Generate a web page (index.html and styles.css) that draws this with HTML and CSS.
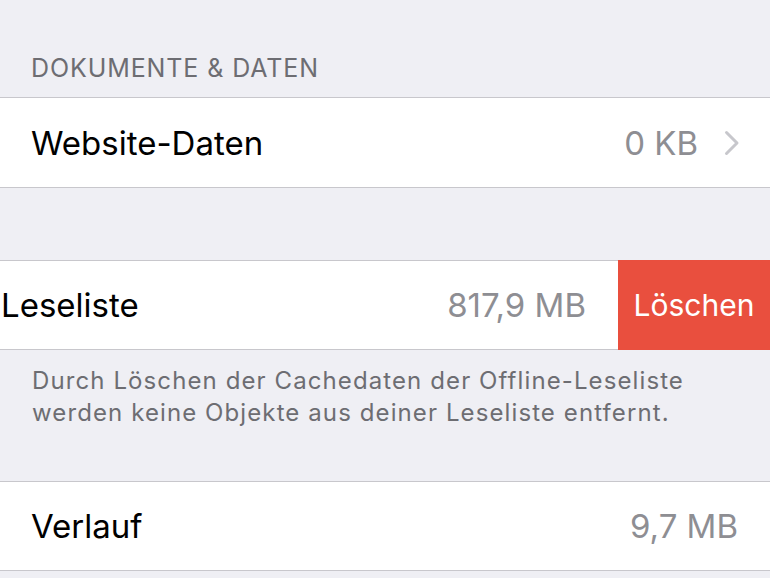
FILE: index.html
```html
<!DOCTYPE html>
<html lang="de">
<head>
<meta charset="utf-8">
<link rel="stylesheet" href="styles.css">
</head>
<body>
<div class="screen">
  <div class="section-header">DOKUMENTE &amp; DATEN</div>
  <div class="group">
    <div class="row row-tall">
      <span class="label">Website-Daten</span>
      <span class="right">
        <span class="value">0 KB</span>
        <svg class="chevron" width="16" height="26" viewBox="0 0 16 26"><path d="M2.5 2.5 L13 13 L2.5 23.5" fill="none" stroke="#c7c7cc" stroke-width="3" stroke-linecap="round" stroke-linejoin="round"/></svg>
      </span>
    </div>
  </div>
  <div class="spacer"></div>
  <div class="group">
    <div class="row swiped">
      <div class="swipe-content">
        <span class="label">Leseliste</span>
        <span class="value">817,9 MB</span>
      </div>
      <div class="delete">Löschen</div>
    </div>
  </div>
  <div class="footer">Durch Löschen der Cachedaten der Offline-Leseliste<br>werden keine Objekte aus deiner Leseliste entfernt.</div>
  <div class="group">
    <div class="row">
      <span class="label">Verlauf</span>
      <span class="value">9,7 MB</span>
    </div>
  </div>
</div>
</body>
</html>
```
FILE: styles.css
```css
html, body {
  margin: 0;
  padding: 0;
  background: #efeff4;
}
.screen {
  width: 770px;
  height: 578px;
  overflow: hidden;
  font-family: Inter, "Noto Sans", sans-serif;
  background: #efeff4;
}
.section-header {
  height: 97px;
  box-sizing: border-box;
  padding: 53px 0 0 31px;
  font-size: 25px;
  line-height: 30px;
  color: #6d6d72;
  letter-spacing: 0.9px;
}
.group {
  background: #fff;
  border-top: 1px solid #c8c7cc;
  border-bottom: 1px solid #c8c7cc;
}
.row {
  height: 88px;
  display: flex;
  align-items: center;
  justify-content: space-between;
  padding: 0 32px 0 31px;
}
.row-tall {
  height: 89px;
}
.label {
  font-size: 33px;
  color: #000;
}
.value {
  font-size: 33px;
  color: #8e8e93;
}
.right {
  display: flex;
  align-items: center;
  gap: 26px;
}
.chevron {
  display: block;
  margin-right: -2px;
}
.spacer {
  height: 72px;
}
.row.swiped {
  padding: 0;
  align-items: stretch;
}
.swipe-content {
  flex: 1;
  display: flex;
  align-items: center;
  justify-content: space-between;
  padding: 0 32px 0 1px;
}
.delete {
  width: 152px;
  background: #e94f3e;
  color: #fff;
  font-size: 30px;
  display: flex;
  align-items: center;
  justify-content: center;
  margin: -1px 0;
}
.footer {
  height: 131px;
  box-sizing: border-box;
  padding: 15px 32px 0 32px;
  font-size: 24px;
  line-height: 32px;
  letter-spacing: 1.1px;
  color: #6d6d72;
}
```
